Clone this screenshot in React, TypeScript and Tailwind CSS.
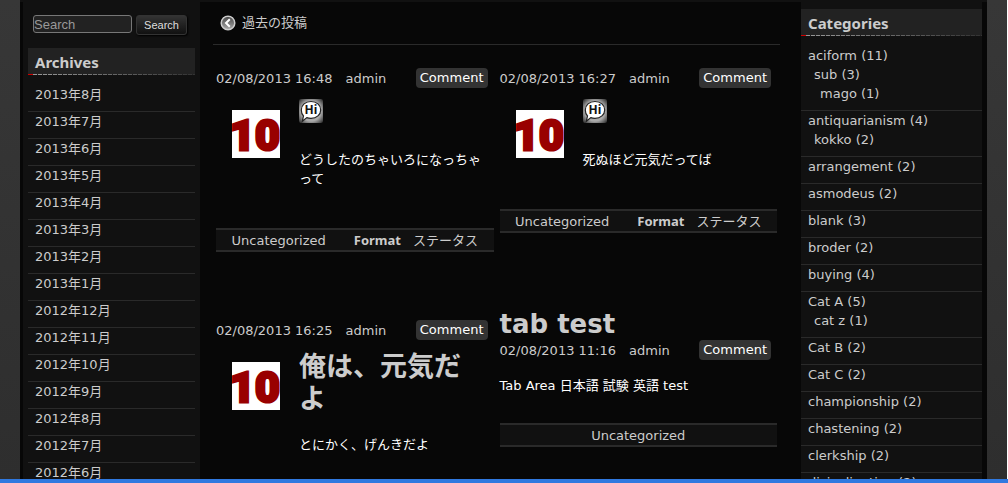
import type { ReactNode } from "react";

const archives = [
  "2013年8月",
  "2013年7月",
  "2013年6月",
  "2013年5月",
  "2013年4月",
  "2013年3月",
  "2013年2月",
  "2013年1月",
  "2012年12月",
  "2012年11月",
  "2012年10月",
  "2012年9月",
  "2012年8月",
  "2012年7月",
  "2012年6月",
];

type Category = { name: string; count: number; children?: Category[] };

const categories: Category[] = [
  {
    name: "aciform",
    count: 11,
    children: [{ name: "sub", count: 3, children: [{ name: "mago", count: 1 }] }],
  },
  { name: "antiquarianism", count: 4, children: [{ name: "kokko", count: 2 }] },
  { name: "arrangement", count: 2 },
  { name: "asmodeus", count: 2 },
  { name: "blank", count: 3 },
  { name: "broder", count: 2 },
  { name: "buying", count: 4 },
  { name: "Cat A", count: 5, children: [{ name: "cat z", count: 1 }] },
  { name: "Cat B", count: 2 },
  { name: "Cat C", count: 2 },
  { name: "championship", count: 2 },
  { name: "chastening", count: 2 },
  { name: "clerkship", count: 2 },
  { name: "disinclination", count: 2 },
];

function WidgetTitle({ children }: { children: ReactNode }) {
  return (
    <div className="bg-[#222]">
      <h2 className="px-[7px] pt-1 pb-[2px] font-['Noto_Sans',sans-serif] text-[15px] leading-5 font-bold text-[#ccc]">
        {children}
      </h2>
      <div className="flex h-px">
        <span className="w-[5px] bg-[#c00]" />
        <span className="flex-1 bg-[repeating-linear-gradient(90deg,transparent_0px,transparent_4px,#222_4px,#222_5px),linear-gradient(90deg,#999,#333)]" />
      </div>
    </div>
  );
}

function CategoryItems({ items }: { items: Category[] }) {
  return (
    <>
      {items.map((c) => (
        <li key={c.name}>
          <a href="#" className="hover:underline">{c.name}</a> ({c.count})
          {c.children && (
            <ul className="pl-[6px]">
              <CategoryItems items={c.children} />
            </ul>
          )}
        </li>
      ))}
    </>
  );
}

function Avatar() {
  return (
    <svg viewBox="0 0 48 48" className="mt-[11px] h-12 w-12 shrink-0" role="img" aria-label="avatar">
      <rect width="48" height="48" fill="#fff" />
      <text
        x="23"
        y="40"
        textAnchor="middle"
        fill="#900"
        stroke="#900"
        strokeWidth="3"
        fontFamily="'Roboto', sans-serif"
        fontWeight="900"
        fontSize="43"
      >
        10
      </text>
    </svg>
  );
}

function HiIcon() {
  return (
    <svg viewBox="0 0 24 24" className="h-6 w-6" role="img" aria-label="status">
      <defs>
        <radialGradient id="halo" r="0.7">
          <stop offset="0.6" stopColor="#aaa" />
          <stop offset="1" stopColor="#222" />
        </radialGradient>
      </defs>
      <rect width="24" height="24" rx="2" fill="url(#halo)" />
      <path
        d="M12 2.500c5.600 0 9.700 3.600 9.700 8.400s-4.100 8.400-9.700 8.400c-1.500 0-3-.2-4.200-.7L3.300 22.300l1.200-5.300C3 15.500 2.300 13.500 2.300 10.900c0-4.800 4.100-8.400 9.700-8.400Z"
        fill="#fff"
        stroke="#222"
        strokeWidth="1.200"
      />
      <text x="12" y="15" textAnchor="middle" fontFamily="'Noto Sans', sans-serif" fontWeight="700" fontSize="12" fill="#111">
        Hi
      </text>
    </svg>
  );
}

function BackIcon() {
  return (
    <svg viewBox="0 0 16 16" className="h-4 w-4" aria-hidden="true">
      <defs>
        <linearGradient id="disc" x1="0" y1="0" x2="0" y2="1">
          <stop offset="0" stopColor="#444" />
          <stop offset="1" stopColor="#aaa" />
        </linearGradient>
      </defs>
      <circle cx="8" cy="8" r="6.800" fill="url(#disc)" stroke="#ccc" strokeWidth="1.500" />
      <path d="M9.800 4.300 6 8l3.800 3.700" fill="none" stroke="#fff" strokeWidth="2" />
    </svg>
  );
}

function Meta({ date }: { date: string }) {
  return (
    <div className="flex h-5 items-center pr-[6px] text-[#ccc]">
      <a href="#">{date}</a>
      <a href="#" className="ml-[13px]">admin</a>
      <a href="#" className="ml-auto rounded bg-[#333] px-1 leading-5 text-white">Comment</a>
    </div>
  );
}

function PostFooter({ format }: { format?: string }) {
  return (
    <footer className="flex h-6 items-center justify-center border-y-2 border-[#2a2a2a] bg-[#111] text-[#ccc]">
      <a href="#">Uncategorized</a>
      {format && (
        <span className="ml-7 flex items-center">
          <b className="font-['Noto_Sans',sans-serif]">Format</b>
          <a href="#" className="ml-3">{format}</a>
        </span>
      )}
    </footer>
  );
}

export default function App() {
  return (
    <div className="flex h-screen flex-col overflow-hidden bg-[#111] font-['DejaVu_Sans','Noto_Sans_CJK_JP',sans-serif] text-[13px] leading-[19px] text-[#ccc]">
      <div className="flex min-h-0 flex-1 overflow-hidden border-r border-white bg-linear-to-b from-[#373737] to-[#2e2e2e] px-5">
        <div className="flex min-w-0 flex-1 border-t-2 border-[#111] bg-[#070707] pr-[5px] pl-[3px]">
          <aside className="w-[177px] shrink-0 bg-[#111] px-[5px]">
            <form className="flex items-start gap-1 pt-[13px] pl-[5px] font-['Liberation_Sans',sans-serif]" onSubmit={(e) => e.preventDefault()}>
              <input
                type="text"
                aria-label="Search"
                placeholder="Search"
                className="h-[18px] w-[99px] rounded-[3px] border border-[#777] bg-[#222] text-[13px] leading-4 text-[#ccc] placeholder:text-[#999]"
              />
              <button
                type="submit"
                className="h-5 w-[51px] rounded-[3px] border border-[#333] bg-linear-to-b from-[#333] to-[#111] text-[11px] leading-4 text-[#ddd] shadow-[1px_1px_2px_#000]"
              >
                Search
              </button>
            </form>
            <div className="pt-[13px]">
              <WidgetTitle>Archives</WidgetTitle>
              <ul className="pt-[10px]">
                {archives.map((a) => (
                  <li key={a} className="border-b border-[#2a2a2a] px-[7px] pb-[7px]">
                    <a href="#" className="hover:underline">{a}</a>
                  </li>
                ))}
              </ul>
            </div>
          </aside>

          <main className="min-w-0 flex-1 pr-[21px] pl-[13px]">
            <nav className="border-b border-[#2a2a2a] pt-[11px] pb-3 pl-[7px]">
              <a href="#" className="flex items-center gap-[6px]">
                <BackIcon />
                過去の投稿
              </a>
            </nav>
            <div className="grid grid-cols-2 gap-[6px] px-[3px] pt-[23px]">
              <div className="flex flex-col gap-[68px]">
                <article>
                  <Meta date="02/08/2013 16:48" />
                  <div className="flex gap-[19px] pt-[11px] pr-3 pb-10 pl-4">
                    <Avatar />
                    <div>
                      <HiIcon />
                      <p className="pt-[27px] text-white">どうしたのちゃいろになっちゃって</p>
                    </div>
                  </div>
                  <PostFooter format="ステータス" />
                </article>
                <article>
                  <Meta date="02/08/2013 16:25" />
                  <div className="flex gap-[19px] pt-[11px] pr-3 pb-10 pl-4">
                    <Avatar />
                    <div>
                      <h2 className="text-[27px] leading-8 font-bold">俺は、元気だよ</h2>
                      <p className="pt-5 text-white">とにかく、げんきだよ</p>
                    </div>
                  </div>
                </article>
              </div>
              <div className="flex flex-col gap-[75px]">
                <article>
                  <Meta date="02/08/2013 16:27" />
                  <div className="flex gap-[19px] pt-[11px] pr-3 pb-10 pl-4">
                    <Avatar />
                    <div>
                      <HiIcon />
                      <p className="pt-[27px] text-white">死ぬほど元気だってば</p>
                    </div>
                  </div>
                  <PostFooter format="ステータス" />
                </article>
                <article>
                  <h2 className="text-[26px] leading-8 font-bold">tab test</h2>
                  <Meta date="02/08/2013 11:16" />
                  <p className="pt-4 pb-7 text-white">Tab Area 日本語 試験 英語 test</p>
                  <PostFooter />
                </article>
              </div>
            </div>
          </main>

          <aside className="w-[181px] shrink-0 bg-[#111] pt-[7px]">
            <WidgetTitle>Categories</WidgetTitle>
            <ul className="pt-[10px]">
              {categories.map((c) => (
                <li key={c.name} className="border-b border-[#2a2a2a] px-[7px] pb-[7px]">
                  <ul>
                    <CategoryItems items={[c]} />
                  </ul>
                </li>
              ))}
            </ul>
          </aside>
        </div>
      </div>
      <div className="h-1 shrink-0 bg-[#3079e0]" />
    </div>
  );
}
